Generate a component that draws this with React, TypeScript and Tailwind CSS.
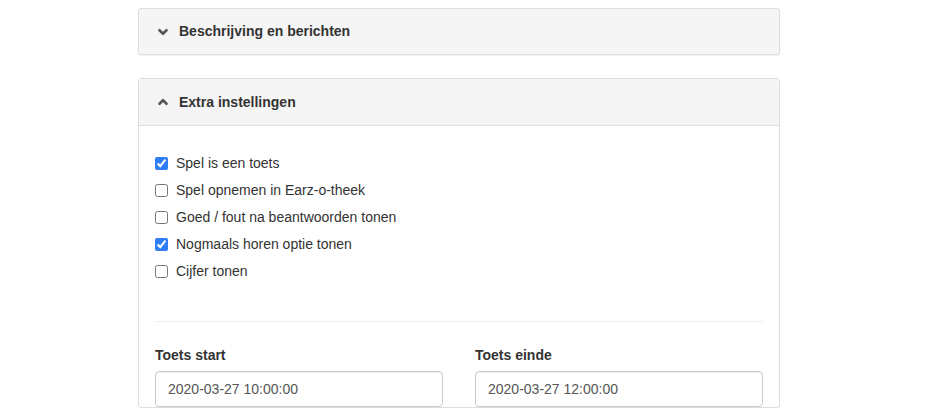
import { ChevronDown, ChevronUp } from "lucide-react";

const options = [
  { label: "Spel is een toets", checked: true },
  { label: "Spel opnemen in Earz-o-theek", checked: false },
  { label: "Goed / fout na beantwoorden tonen", checked: false },
  { label: "Nogmaals horen optie tonen", checked: true },
  { label: "Cijfer tonen", checked: false },
];

export default function App() {
  return (
    <div className="w-[932px] h-[419px] overflow-hidden bg-white pt-2 text-[14px] text-[#333]" style={{ fontFamily: '"Liberation Sans", Arial, sans-serif' }}>
      <div className="ml-[138px] w-[642px]">
        <div className="h-[47px] flex items-center gap-[9px] px-[17px] rounded-[3px] border border-[#ddd] bg-[#f5f5f5] shadow-[0_1px_1px_rgba(0,0,0,0.05)] font-bold">
          <ChevronDown className="w-[14px] h-[14px]" strokeWidth={4.5} color="#555" />
          Beschrijving en berichten
        </div>
        <div className="mt-[23px] rounded-[3px] border border-[#ddd]">
          <div className="h-[47px] flex items-center gap-[9px] px-[17px] border-b border-[#ddd] bg-[#f5f5f5] font-bold">
            <ChevronUp className="w-[14px] h-[14px]" strokeWidth={4.5} color="#555" />
            Extra instellingen
          </div>
          <div className="px-4 pt-[24px]">
            <div className="flex flex-col">
              {options.map((o) => (
                <label key={o.label} className="h-[27px] flex items-center gap-[8px]">
                  <input type="checkbox" defaultChecked={o.checked} className="w-[13px] h-[13px] m-0 accent-[#2f7ef6]" />
                  {o.label}
                </label>
              ))}
            </div>
            <div className="mt-[36px] border-t border-[#eee]" />
            <div className="mt-[23px] grid grid-cols-2 gap-[32px]">
              {[["Toets start", "2020-03-27 10:00:00"], ["Toets einde", "2020-03-27 12:00:00"]].map(([l, v]) => (
                <div key={l}>
                  <div className="font-bold mb-[5px]">{l}</div>
                  <input readOnly value={v} className="w-full h-[36px] px-[12px] rounded-[4px] border border-[#ccc] text-[#555] shadow-[inset_0_1px_1px_rgba(0,0,0,0.075)] outline-none" />
                </div>
              ))}
            </div>
          </div>
        </div>
      </div>
    </div>
  );
}
